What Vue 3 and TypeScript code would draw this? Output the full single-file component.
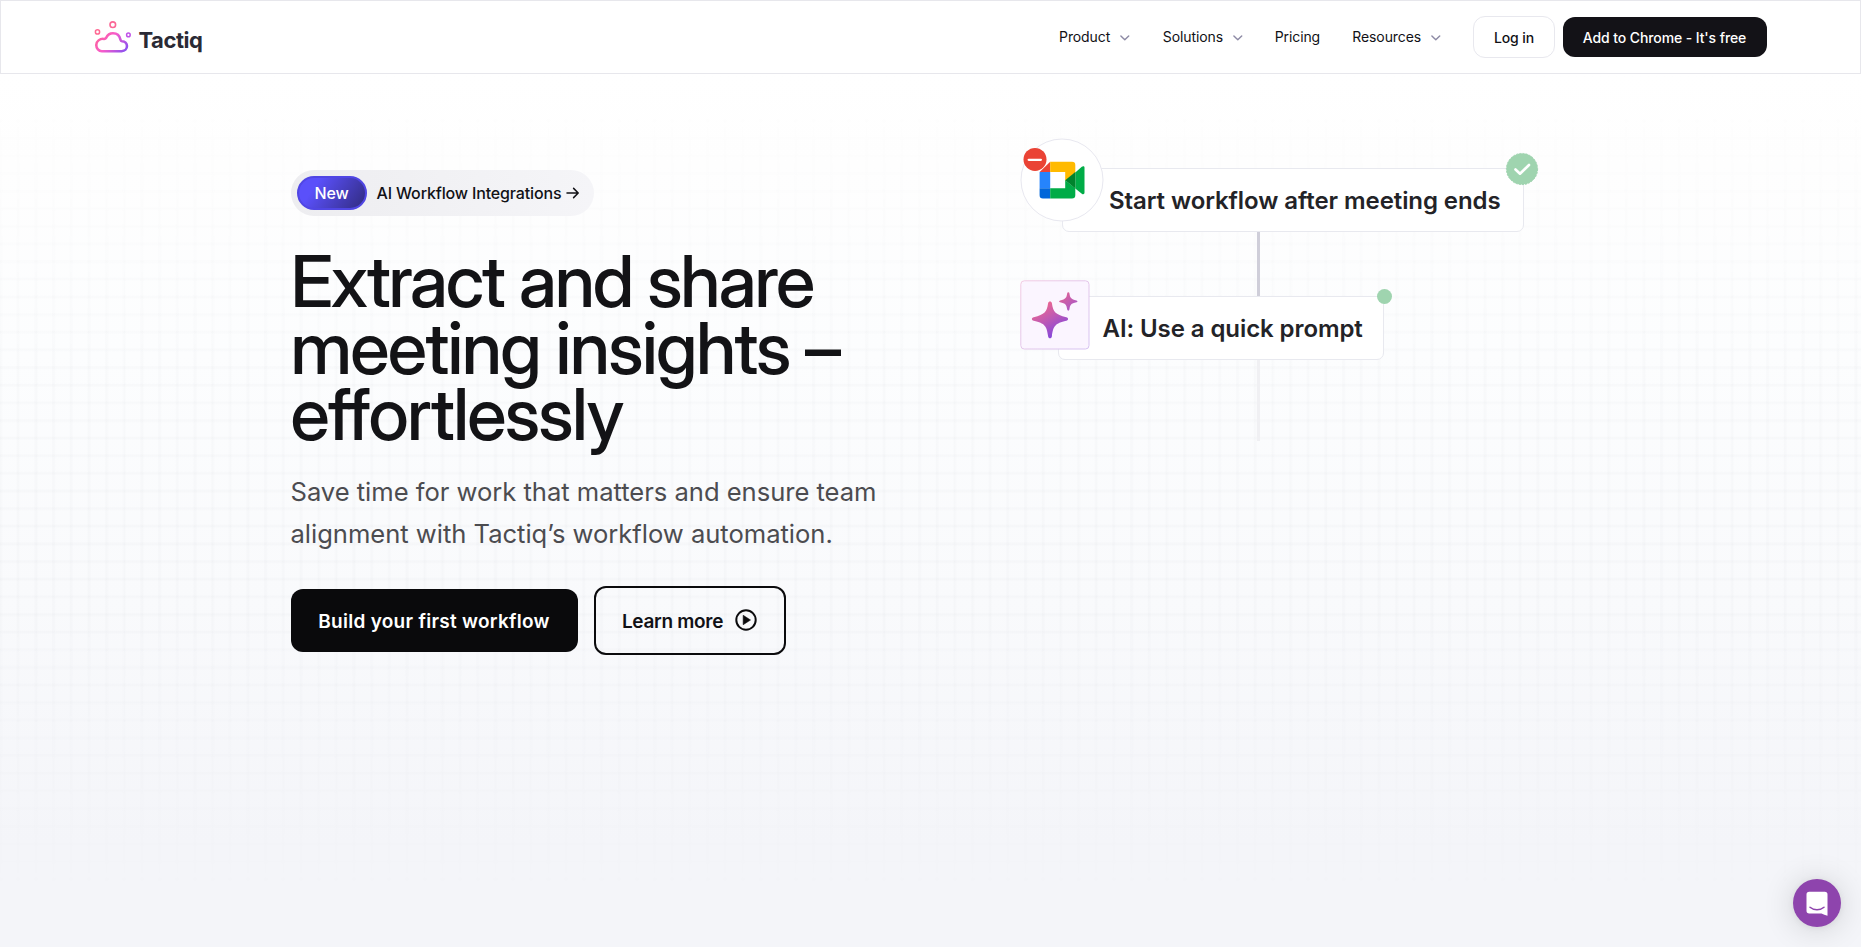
<script setup lang="ts">
interface NavItem {
  label: string
  menu: boolean
  key: string
}

const navItems: NavItem[] = [
  { label: 'Product', menu: true, key: 'product' },
  { label: 'Solutions', menu: true, key: 'solutions' },
  { label: 'Pricing', menu: false, key: 'pricing' },
  { label: 'Resources', menu: true, key: 'resources' },
]
</script>

<template>
  <div class="page">
    <header class="header">
      <div class="header-inner">
        <a class="brand">
          <svg class="brand-mark" width="38" height="35" viewBox="0 0 38 35" fill="none">
            <defs>
              <linearGradient id="cloud" x1="4" y1="12" x2="33" y2="34" gradientUnits="userSpaceOnUse">
                <stop offset="0" stop-color="#ff6392" />
                <stop offset="0.42" stop-color="#f75ccb" />
                <stop offset="1" stop-color="#7a4ff5" />
              </linearGradient>
            </defs>
            <path d="M8 31.700h19.200c3.100 0 5.200-2.200 5.200-5.100 0-2.700-2-4.700-4.800-4.900-.900-.1-1.300-.6-1.500-1.500-.800-3.700-3.500-6.400-7.300-6.400-3.300 0-5.500 2-6.700 4.600-.500 1-1.200 1.100-2.300 1-3.700-.3-7.200 2.200-7.200 6.100C2.600 29.100 5 31.700 8 31.700Z" transform="translate(-.4 .5) scale(1.030 1)" stroke="url(#cloud)" stroke-width="2.500" />
            <circle cx="18.800" cy="5.700" r="2.800" stroke="#fb6796" stroke-width="1.600" />
            <circle cx="3.500" cy="12.900" r="2.100" stroke="#ff6a94" stroke-width="1.500" />
            <circle cx="34.400" cy="15.900" r="1.800" stroke="#c052e8" stroke-width="1.500" />
          </svg>
          <span class="brand-name">Tactiq</span>
        </a>
        <nav class="nav">
          <a v-for="item in navItems" :key="item.key" class="nav-item" :class="item.key">
            <span>{{ item.label }}</span>
            <svg v-if="item.menu" class="chevron" width="9.500" height="6" viewBox="0 0 9.500 6" fill="none">
              <path d="M.9.900 4.800 4.800 8.700.9" stroke="#8d8aa5" stroke-width="1.400" stroke-linecap="round" stroke-linejoin="round" />
            </svg>
          </a>
        </nav>
        <a class="login">Log in</a>
        <a class="install">Add to Chrome - It's free</a>
      </div>
    </header>

    <main class="hero">
      <div class="grid-lines"></div>
      <div class="hero-inner">
        <section class="copy">
          <a class="announce">
            <span class="tag">New</span>
            <span class="announce-text">AI Workflow Integrations</span>
            <svg width="14" height="12" viewBox="0 0 14 12" fill="none">
              <path d="M1 6h11M7.600 1.400 12.200 6l-4.600 4.600" stroke="#111116" stroke-width="1.500" stroke-linecap="round" stroke-linejoin="round" />
            </svg>
          </a>
          <h1 class="title">
            <span class="line one">Extract and share</span>
            <span class="line two">meeting insights –</span>
            <span class="line three">effortlessly</span>
          </h1>
          <p class="lead">
            <span class="line">Save time for work that matters and ensure team</span>
            <span class="line">alignment with Tactiq’s workflow automation.</span>
          </p>
          <div class="actions">
            <a class="primary">Build your first workflow</a>
            <a class="secondary">
              <span>Learn more</span>
              <svg width="22" height="22" viewBox="0 0 22 22" fill="none">
                <circle cx="11" cy="11" r="9.700" stroke="#0b0b0d" stroke-width="2" />
                <path d="M8.200 6.300v9.400L15.500 11Z" fill="#0b0b0d" stroke="#0b0b0d" stroke-width=".6" stroke-linejoin="round" />
              </svg>
            </a>
          </div>
        </section>

        <section class="diagram">
          <span class="wire wire-a"></span>
          <span class="wire wire-b"></span>
          <div class="node node-start"><span class="node-text">Start workflow after meeting ends</span></div>
          <div class="node node-prompt"><span class="node-text">AI: Use a quick prompt</span></div>
          <svg class="meet" width="84" height="84" viewBox="0 0 84 84">
            <circle cx="42" cy="42" r="41" fill="#fff" stroke="#e8e8f0" stroke-width="1" />
            <path d="M30.200 23.700v10.300H19.600Z" fill="#ea4335" />
            <path d="M30.200 23.700h21.800a3.300 3.300 0 0 1 3.300 3.300v7.600l-10.100 8.300V34h-15Z" fill="#ffba00" />
            <path d="M19.600 34h10.600v16.200H19.600Z" fill="#2684fc" />
            <path d="M19.600 50.200h10.600v10.300h-7.300a3.300 3.300 0 0 1-3.300-3.300Z" fill="#0066da" />
            <path d="M30.200 50.200h15v-7.900l10.100 8v6.900a3.300 3.300 0 0 1-3.300 3.300H30.200Z" fill="#00ac47" />
            <path d="M55.300 34.400 61.800 28.700c1.300-1 2.700-.6 2.700.9v25.200c0 1.500-1.400 1.900-2.700.9l-6.500-5.300Z" fill="#00ac47" />
            <path d="M45.200 42.200 55.300 34v16.500Z" fill="#00832d" />
            <circle cx="15" cy="21.400" r="11.500" fill="#ea4335" />
            <path d="M8.700 21.800h12.200" stroke="#fff" stroke-width="2.300" stroke-linecap="round" />
          </svg>
          <svg class="spark" width="70" height="70" viewBox="0 0 70 70">
            <defs>
              <linearGradient id="edge" x1="0" y1="0" x2="70" y2="70" gradientUnits="userSpaceOnUse">
                <stop offset="0" stop-color="#f3cbe3" />
                <stop offset="1" stop-color="#d5c2f2" />
              </linearGradient>
              <linearGradient id="star" x1="18" y1="25" x2="36" y2="56" gradientUnits="userSpaceOnUse">
                <stop offset="0" stop-color="#f0688d" />
                <stop offset="0.500" stop-color="#bd59b5" />
                <stop offset="1" stop-color="#8447dc" />
              </linearGradient>
              <linearGradient id="mini" x1="41" y1="12" x2="56" y2="30" gradientUnits="userSpaceOnUse">
                <stop offset="0" stop-color="#e6658f" />
                <stop offset="1" stop-color="#a355cd" />
              </linearGradient>
            </defs>
            <rect x=".8" y=".8" width="68.200" height="68.200" rx="3.500" fill="#fbf5ff" stroke="url(#edge)" />
            <path d="M30 21.500c1 0 1.700.6 1.900 1.800 1.300 8.700 3.200 11.200 14.400 13.900 2.400.6 2.400 3 0 3.600-11.200 2.700-13 5.200-14.400 15.400-.3 2.700-3.500 2.700-3.800 0-1.400-10.200-3.200-12.700-14.400-15.400-2.400-.6-2.400-3 0-3.600 11.200-2.700 13.100-5.200 14.400-13.900.2-1.200.9-1.800 1.900-1.800Z" fill="url(#star)" />
            <path d="M48.300 12.200c.6 0 1 .4 1.100 1.100.7 4.600 1.500 5.900 7.100 7.100 1.300.3 1.300 1.600 0 1.900-5.600 1.200-6.400 2.500-7.100 7.300-.2 1.400-2 1.400-2.200 0-.7-4.800-1.500-6.100-7.100-7.300-1.300-.3-1.300-1.600 0-1.900 5.600-1.200 6.400-2.500 7.100-7.100.1-.7.500-1.100 1.100-1.100Z" fill="url(#mini)" />
          </svg>
          <svg class="done" width="34" height="34" viewBox="0 0 34 34" fill="none">
            <circle cx="17" cy="17" r="15.600" fill="#9fd4af" />
            <circle cx="17" cy="17" r="15.600" stroke="#9fd4af" stroke-width="1" stroke-dasharray="2 1.200" />
            <path d="m10.500 17.500 4.500 4.200 9-8.700" stroke="#fff" stroke-width="2.600" stroke-linecap="round" stroke-linejoin="round" />
          </svg>
          <span class="dot"></span>
        </section>
      </div>
    </main>

    <button class="chat" aria-label="Open chat">
      <svg width="22" height="25" viewBox="0 0 22 25" fill="none">
        <path d="M3.200.8h15.600a2.700 2.700 0 0 1 2.700 2.700v21.200c-2.200-.5-4.200-1.300-6-2.300H3.200a2.700 2.700 0 0 1-2.700-2.700V3.500A2.700 2.700 0 0 1 3.200.8Z" fill="#fff" />
        <path d="M4 16.200c4 3.400 10 3.400 14 0" stroke="#8e44ad" stroke-width="1.500" stroke-linecap="round" />
      </svg>
    </button>
  </div>
</template>

<style>
body {
  margin: 0;
  overflow: hidden;
}
</style>

<style scoped>
.page {
  height: 947px;
  display: flex;
  flex-direction: column;
  font-family: Inter, "Liberation Sans", sans-serif;
  color: #111116;
  background: #fff;
}

.header {
  box-sizing: border-box;
  height: 74px;
  flex: none;
  border: 1px solid #e7e7ec;
  background: #fff;
}

.header-inner {
  width: 1672px;
  height: 72px;
  margin: 0 auto;
  display: flex;
  align-items: center;
  font-size: 14px;
  letter-spacing: -0.100px;
}

.brand {
  display: flex;
  align-items: center;
  margin-right: auto;
}

.brand-mark {
  margin-left: -1px;
  margin-top: -1px;
}

.brand-name {
  margin-left: 7px;
  margin-top: 6px;
  font-size: 22px;
  font-weight: 700;
  line-height: 26px;
  letter-spacing: -0.450px;
  color: #2a2a35;
}

.nav {
  display: flex;
  gap: 32.200px;
  margin-right: 32px;
  line-height: 20px;
}

.nav-item {
  display: flex;
  align-items: center;
  gap: 10px;
  white-space: nowrap;
}

.product {
  margin-right: 1px;
}

.chevron {
  margin-top: 2px;
}

.login,
.install {
  box-sizing: border-box;
  display: flex;
  align-items: center;
  justify-content: center;
  border-radius: 12px;
  font-weight: 500;
  white-space: nowrap;
}

.login {
  width: 82px;
  height: 42px;
  padding-left: 1px;
  border: 1px solid #e8e8ee;
  margin-right: 8px;
}

.install {
  width: 204px;
  height: 40px;
  background: #131217;
  color: #fff;
}

.hero {
  position: relative;
  flex: 1;
  background: linear-gradient(180deg, #fff 0%, #fefefe 10%, #fcfdfe 32%, #f9fafc 60%, #f4f5f9 88%, #f4f5f9 100%);
}

.grid-lines {
  position: absolute;
  inset: 0;
  background-image:
    repeating-linear-gradient(90deg, rgba(20, 30, 50, 0.017) 0 1px, transparent 3px 16.200px, rgba(20, 30, 50, 0.017) 17.670px),
    repeating-linear-gradient(180deg, rgba(20, 30, 50, 0.017) 0 1px, transparent 3px 16.200px, rgba(20, 30, 50, 0.017) 17.640px);
  background-position: 0 -7px;
  mask-image: linear-gradient(180deg, transparent 2%, #000 35%, #000 60%, transparent 96%);
}

.hero-inner {
  position: relative;
  width: 1280px;
  margin: 0 auto;
  display: grid;
  grid-template-columns: 728.500px 551.500px;
}

.copy {
  padding-top: 96px;
}

.announce {
  box-sizing: border-box;
  width: 303px;
  height: 46px;
  padding-left: 6px;
  display: flex;
  align-items: center;
  border-radius: 23px;
  background: linear-gradient(90deg, #ededf0, #f5f5f8);
  font-size: 16px;
  font-weight: 500;
  letter-spacing: -0.150px;
  white-space: nowrap;
}

.tag {
  box-sizing: border-box;
  width: 70px;
  height: 34px;
  display: flex;
  align-items: center;
  justify-content: center;
  border: 2px solid #5046e4;
  border-radius: 17px;
  background: linear-gradient(125deg, #5a50fa 25%, #342e88 95%);
  color: #fff;
}

.announce-text {
  margin: 0 5px 0 10px;
}

.title {
  margin: 32px 0 0;
  font-family: "Inter Display", Inter, sans-serif;
  font-size: 72px;
  font-weight: 500;
  line-height: 66.500px;
  white-space: nowrap;
  color: #131316;
}

.one {
  letter-spacing: -2.150px;
}

.two {
  letter-spacing: -1.660px;
}

.three {
  letter-spacing: -1.680px;
}

.line {
  display: block;
}

.lead {
  margin: 23px 0 0;
  font-size: 25.600px;
  line-height: 42px;
  letter-spacing: -0.030px;
  color: #4c4c50;
  white-space: nowrap;
}

.actions {
  display: flex;
  align-items: center;
  gap: 16px;
  margin-top: 31px;
}

.primary,
.secondary {
  box-sizing: border-box;
  display: flex;
  align-items: center;
  justify-content: center;
  font-weight: 600;
  font-size: 19px;
  white-space: nowrap;
}

.primary {
  width: 287px;
  height: 63px;
  padding-top: 2px;
  border-radius: 12px;
  background: #0a0a0c;
  color: #fff;
  letter-spacing: 0.280px;
}

.secondary {
  width: 192px;
  height: 69px;
  gap: 12px;
  border: 2px solid #0b0b0d;
  border-radius: 12px;
  letter-spacing: -0.300px;
}

.secondary span {
  padding-top: 2px;
}

.diagram {
  position: relative;
}

.node {
  position: absolute;
  box-sizing: border-box;
  display: flex;
  align-items: center;
  border: 1px solid #e8e9ef;
  border-radius: 7px;
  background: #fff;
  font-size: 24px;
  font-weight: 600;
  letter-spacing: -0.080px;
  color: #232327;
  white-space: nowrap;
}

.node-start {
  left: 43px;
  top: 94px;
  width: 462px;
  height: 64px;
  padding-left: 46px;
}

.node-prompt {
  left: 39px;
  top: 222px;
  width: 326px;
  height: 64px;
  padding-left: 43.500px;
}

.wire {
  position: absolute;
  left: 238px;
  width: 3px;
}

.wire-a {
  top: 158px;
  height: 64px;
  background: #cfced9;
}

.wire-b {
  top: 286px;
  height: 81px;
  background: #f0f0f3;
}

.meet {
  position: absolute;
  left: 0.600px;
  top: 63.500px;
}

.spark {
  position: absolute;
  left: 1px;
  top: 205.500px;
}

.done {
  position: absolute;
  left: 485.500px;
  top: 77.500px;
}

.dot {
  position: absolute;
  left: 357.500px;
  top: 214.500px;
  width: 15px;
  height: 15px;
  border-radius: 50%;
  background: #9fd4af;
}

.chat {
  position: absolute;
  left: 1793px;
  top: 879px;
  width: 48px;
  height: 48px;
  padding: 0;
  display: flex;
  align-items: center;
  justify-content: center;
  border: 0;
  border-radius: 50%;
  background: #8e44ad;
  box-shadow: 0 1px 6px rgba(0, 0, 0, 0.06), 0 2px 32px rgba(0, 0, 0, 0.16);
}
</style>
